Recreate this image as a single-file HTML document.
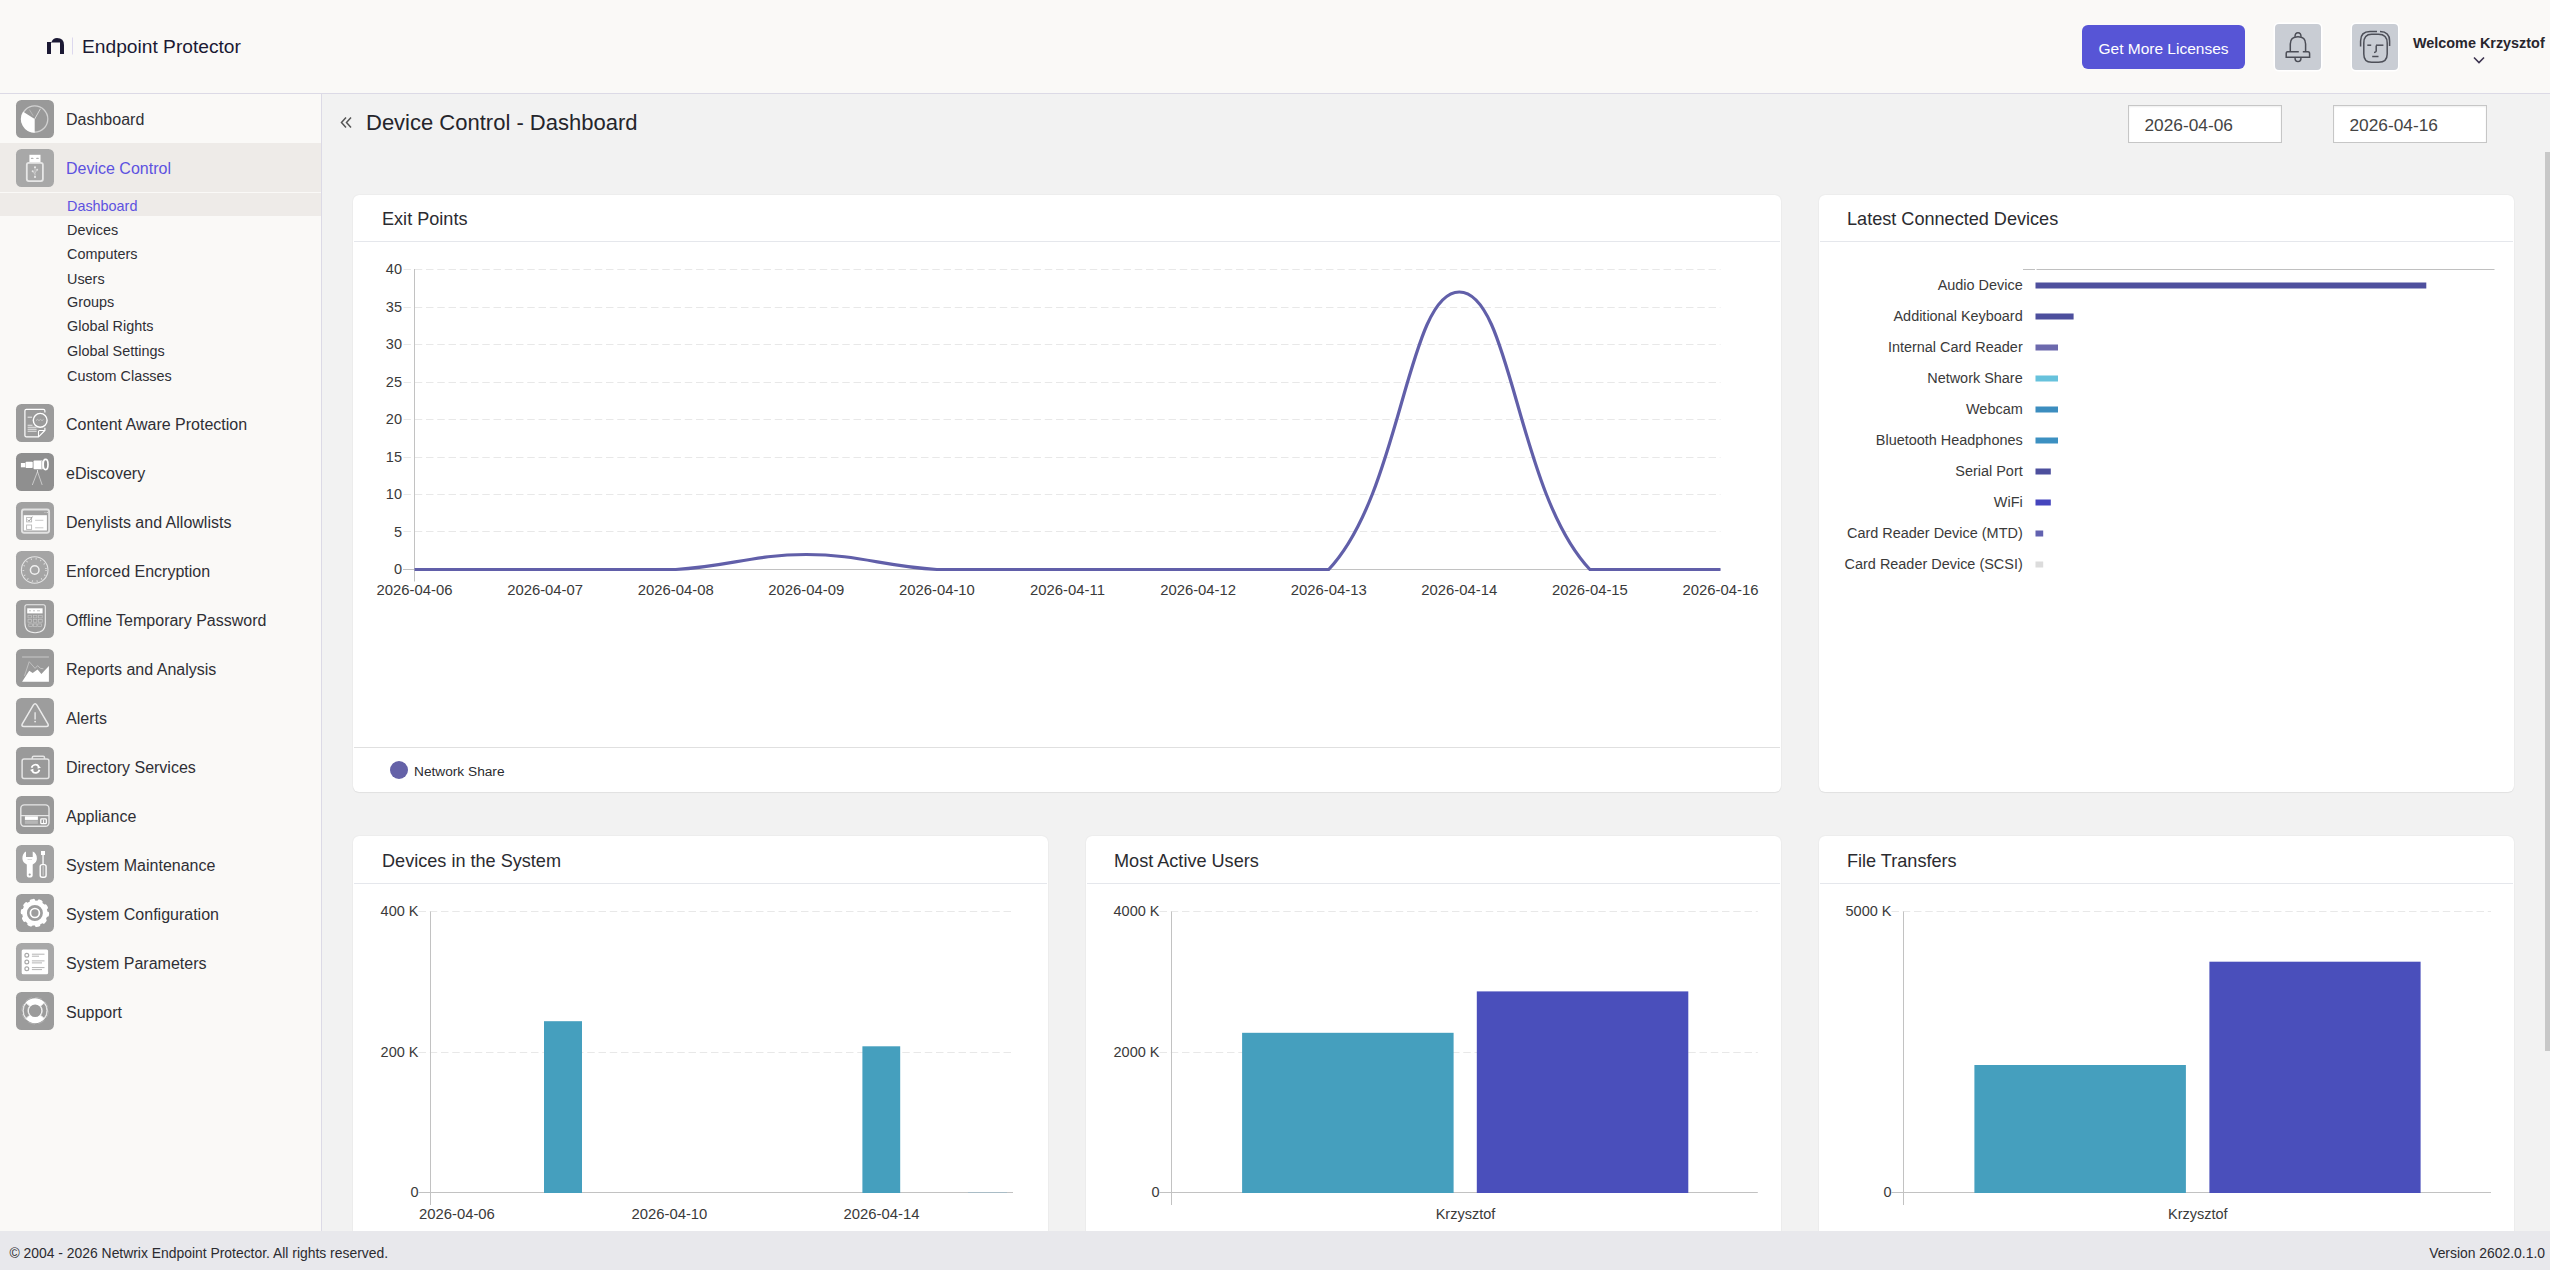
<!DOCTYPE html>
<html><head><meta charset="utf-8"><title>Device Control - Dashboard</title><style>
*{margin:0;padding:0;box-sizing:border-box}
html,body{width:2550px;height:1270px;overflow:hidden;background:#f2f2f2;font-family:"Liberation Sans",sans-serif}
.t{position:absolute;white-space:nowrap}
.abs{position:absolute}
.hdr{position:absolute;left:0;top:0;width:2550px;height:94px;background:#faf9f7;border-bottom:1px solid #dcdae6}
.side{position:absolute;left:0;top:94px;width:322px;height:1137px;background:#faf9f7;border-right:1px solid #dcdae6}
.foot{position:absolute;left:0;top:1231px;width:2550px;height:39px;background:#e8e8ec}
.card{position:absolute;background:#fff;border-radius:6px;box-shadow:0 0 1.5px rgba(0,0,0,0.10),0 1px 1px rgba(0,0,0,0.05)}
.ico{position:absolute;left:16px;width:38px;height:38px;border-radius:5.5px;background:#9b9b9b;overflow:hidden}
.ico svg{position:absolute;left:0;top:0}
</style></head><body>
<div class="hdr"></div>
<div class="side"></div>
<svg class="abs" style="left:40px;top:30px" width="40" height="30" viewBox="40 30 40 30"><path d="M47 54 V42 H51.5 Q53 38 57 38 Q64 38 64 45 V54 H60 V42.5 H51 V54 Z" fill="#1b1934"/><rect x="72" y="37.5" width="1" height="17" fill="#dcd8ee"/></svg>
<div class="t" style="top:36.74px;font-size:19.2px;line-height:19.2px;color:#1b1934;left:82px;">Endpoint Protector</div>

<div class="abs" style="left:2082px;top:25px;width:163px;height:44px;background:#5755d6;border-radius:6px"></div>
<div class="t" style="top:40.88px;font-size:15.5px;line-height:15.5px;color:#ffffff;left:1863.5px;width:600px;text-align:center;">Get More Licenses</div>

<div class="abs" style="left:2275px;top:24px;width:46px;height:46px;background:#c9cdd4;border-radius:4px;box-shadow:0 0 0 1.5px #fff"></div>
<svg class="abs" style="left:2275px;top:24px" width="46" height="46" viewBox="0 0 46 46" fill="none" stroke="#4b4d56" stroke-width="1.5"><path d="M15.3 27.3 V20 Q15.3 12.8 23 12.8 Q30.6 12.8 30.6 20 V27.3"/><path d="M12.6 27.8 H23.8 M27.8 27.8 H33 Q34.6 27.8 34.6 29.8 V33.2 H11.2 V29.8 Q11.2 27.8 12.6 27.8"/><path d="M20 12.8 Q20 8.8 23 8.8 Q26 8.8 26 12.8"/><path d="M20 33.4 Q20 37.5 23 37.5 Q26 37.5 26 33.4"/></svg>
<div class="abs" style="left:2352px;top:24px;width:46px;height:46px;background:#c9cdd4;border-radius:4px;box-shadow:0 0 0 1.5px #fff"></div>
<svg class="abs" style="left:2352px;top:24px" width="46" height="46" viewBox="0 0 46 46" fill="none" stroke="#4d4f58" stroke-width="1.5"><path d="M19.5 10.2 H26.5 Q35.2 10.2 35.2 19 V30 Q35.2 38.3 26.5 38.3 H19.5 Q11.8 38.3 11.8 30 V19 Q11.8 10.2 19.5 10.2 Z"/><path d="M8.6 22.5 V17 Q8.6 7.6 18 7.6 H25"/><path d="M28 7.6 Q37.6 7.8 37.6 17 V22"/><path d="M15.3 21.2 H19.2"/><path d="M24 21.2 H31.4"/><path d="M24.2 21.4 V27.2 Q24 28.4 22 28.4"/><path d="M20.2 32.5 H26.5"/></svg>
<div class="t" style="top:35.81px;font-size:14.4px;line-height:14.4px;color:#28262e;font-weight:bold;left:2413px;">Welcome Krzysztof</div>

<svg class="abs" style="left:2472px;top:55px" width="14" height="10" viewBox="0 0 14 10"><path d="M2 2.5 L7 7.5 L12 2.5" fill="none" stroke="#3d3450" stroke-width="1.6"/></svg>
<div class="abs" style="left:0;top:143px;width:321px;height:49px;background:#eeebe8"></div>
<div class="abs" style="left:0;top:193px;width:321px;height:23px;background:#eeebe8"></div>
<div class="ico" style="top:100px;background:#999999"><svg width="38" height="38" viewBox="0 0 38 38"><circle cx="18.7" cy="19" r="13.1" fill="none" stroke="#d2d2d2" stroke-width="1.3"/><path d="M18.7 19 L18.7 32.7 A13.7 13.7 0 0 1 7.14 11.64 Z" fill="#fff"/><path d="M18.7 19 L24.4 8.8" stroke="#dadada" stroke-width="1"/><path d="M13.4 9.6 L17.2 15.8" stroke="#bdbdbd" stroke-width="0.8"/></svg></div>
<div class="ico" style="top:149px;background:#a8a8a8"><svg width="38" height="38" viewBox="0 0 38 38"><rect x="13.4" y="5.8" width="11.1" height="7.6" fill="#fff"/><rect x="14.9" y="8.7" width="2.6" height="1.3" rx="0.6" fill="#b4b4b4"/><rect x="20.2" y="8.7" width="2.6" height="1.3" rx="0.6" fill="#b4b4b4"/><rect x="10.8" y="13.8" width="16.1" height="18.3" rx="2" fill="none" stroke="#e6e6e6" stroke-width="1.8"/><path d="M19 18.2 V28.1 M19 25.5 L16.7 22.2 M19 24 L21.2 20.7" stroke="#cfcfcf" stroke-width="0.8" fill="none"/><circle cx="19" cy="18.2" r="1" fill="#eee"/><circle cx="19" cy="28.1" r="1" fill="#eee"/><circle cx="16.7" cy="22.2" r="1" fill="#e6e6e6"/><circle cx="21.2" cy="20.7" r="1" fill="#ddd"/></svg></div>
<div class="t" style="top:112.25px;font-size:16px;line-height:16px;color:#2f2f35;left:66px;">Dashboard</div>

<div class="t" style="top:161.05px;font-size:16px;line-height:16px;color:#5d52e0;left:66px;">Device Control</div>

<div class="t" style="top:199.01px;font-size:14.4px;line-height:14.4px;color:#5d52e0;left:67px;">Dashboard</div>

<div class="t" style="top:223.01px;font-size:14.4px;line-height:14.4px;color:#2f2f35;left:67px;">Devices</div>

<div class="t" style="top:247.01px;font-size:14.4px;line-height:14.4px;color:#2f2f35;left:67px;">Computers</div>

<div class="t" style="top:271.61px;font-size:14.4px;line-height:14.4px;color:#2f2f35;left:67px;">Users</div>

<div class="t" style="top:295.41px;font-size:14.4px;line-height:14.4px;color:#2f2f35;left:67px;">Groups</div>

<div class="t" style="top:319.41px;font-size:14.4px;line-height:14.4px;color:#2f2f35;left:67px;">Global Rights</div>

<div class="t" style="top:343.51px;font-size:14.4px;line-height:14.4px;color:#2f2f35;left:67px;">Global Settings</div>

<div class="t" style="top:368.51px;font-size:14.4px;line-height:14.4px;color:#2f2f35;left:67px;">Custom Classes</div>

<div class="ico" style="top:404px;background:#9b9b9b"><svg width="38" height="38" viewBox="0 0 38 38"><path d="M17 5.3 H27.4 Q28.9 5.3 28.9 6.8 V8.5" fill="none" stroke="#fff" stroke-width="1.2"/><path d="M17 5.3 H10.4 Q8.9 5.3 8.9 6.8 V31.4 Q8.9 32.9 10.4 32.9 H22.5 L28.9 26.5 V23.8" fill="none" stroke="#fff" stroke-width="1.2"/><path d="M22.5 32.9 V27.6 Q22.5 26.5 23.6 26.5 H28.9" fill="none" stroke="#fff" stroke-width="1.1"/><circle cx="24.2" cy="16.3" r="6.9" fill="none" stroke="#fff" stroke-width="1.4"/><path d="M20 16.6 L21.5 15.4 L23 16.6 L24.5 15.4 L26 16.6 L27.5 15.4" fill="none" stroke="#d6d6d6" stroke-width="0.7"/><path d="M11.6 13.2 H16" stroke="#eee" stroke-width="1"/><path d="M11.6 21.3 H16.5 M11.6 23.3 H20.6 M11.6 25.3 H20.6 M11.6 27.3 H20.6" stroke="#e8e8e8" stroke-width="1.1"/></svg></div>
<div class="t" style="top:417.05px;font-size:16px;line-height:16px;color:#2f2f35;left:66px;">Content Aware Protection</div>

<div class="ico" style="top:453px;background:#8f8f8f"><svg width="38" height="38" viewBox="0 0 38 38"><rect x="4.9" y="10" width="4.4" height="4.3" fill="#fff"/><rect x="9.6" y="8.8" width="7.1" height="6.3" rx="0.8" fill="#fff"/><rect x="17.5" y="7.6" width="9.5" height="8.7" rx="1" fill="#fff"/><rect x="25" y="7.8" width="1.6" height="8.3" fill="#cfcfcf"/><ellipse cx="29.6" cy="11.5" rx="2.4" ry="5.1" fill="none" stroke="#fff" stroke-width="1.7"/><path d="M21.5 18.6 L16.3 32 M21.5 18.6 L26.2 32" stroke="#d8d8d8" stroke-width="0.8"/><path d="M21.5 17 V19.5" stroke="#ddd" stroke-width="1"/></svg></div>
<div class="t" style="top:466.05px;font-size:16px;line-height:16px;color:#2f2f35;left:66px;">eDiscovery</div>

<div class="ico" style="top:502px;background:#a2a2a2"><svg width="38" height="38" viewBox="0 0 38 38"><rect x="5.9" y="7.5" width="27.2" height="23.2" rx="2.2" fill="none" stroke="#e2e2e2" stroke-width="1.9"/><rect x="7.7" y="13.2" width="23.2" height="15.3" fill="#fff"/><circle cx="31.3" cy="10.4" r="0.7" fill="#ddd"/><circle cx="29" cy="10.4" r="0.6" fill="#c8c8c8"/><rect x="10.6" y="15.4" width="5" height="4.5" fill="none" stroke="#b8b8b8" stroke-width="0.9"/><rect x="10.6" y="23" width="5" height="4.4" fill="none" stroke="#b8b8b8" stroke-width="0.9"/><path d="M11.5 17.6 L13 19.2 L16.5 14.6" stroke="#9a9a9a" stroke-width="0.9" fill="none"/><path d="M19.1 18.3 H27.4 M19.1 25.8 H27.4" stroke="#c4c4c4" stroke-width="0.9"/></svg></div>
<div class="t" style="top:515.05px;font-size:16px;line-height:16px;color:#2f2f35;left:66px;">Denylists and Allowlists</div>

<div class="ico" style="top:551px;background:#a5a5a5"><svg width="38" height="38" viewBox="0 0 38 38"><circle cx="18.7" cy="19" r="13.3" fill="none" stroke="#e4e4e4" stroke-width="1.1"/><circle cx="18.7" cy="19" r="11.3" fill="none" stroke="#e0e0e0" stroke-width="1.6" stroke-dasharray="0.9 4.0"/><circle cx="18.7" cy="19" r="4.3" fill="none" stroke="#f0f0f0" stroke-width="1.5"/></svg></div>
<div class="t" style="top:564.05px;font-size:16px;line-height:16px;color:#2f2f35;left:66px;">Enforced Encryption</div>

<div class="ico" style="top:600px;background:#9b9b9b"><svg width="38" height="38" viewBox="0 0 38 38"><path d="M10.9 4.7 H27.3 Q29.3 4.7 29.3 6.7 V23 Q29.3 32.7 19.1 32.7 Q8.9 32.7 8.9 23 V6.7 Q8.9 4.7 10.9 4.7 Z" fill="none" stroke="#ececec" stroke-width="1.1"/><rect x="11.2" y="8.3" width="15.4" height="5.1" fill="#fff"/><path d="M13 10.8 H15 M17 10.8 H19 M21 10.8 H24" stroke="#bdbdbd" stroke-width="0.9"/><g fill="none" stroke="#c6c6c6" stroke-width="0.7"><rect x="12" y="15.3" width="3.6" height="2.6"/><rect x="17.3" y="15.3" width="3.6" height="2.6"/><rect x="22.6" y="15.3" width="3.6" height="2.6"/><rect x="12" y="19.6" width="3.6" height="2.6"/><rect x="17.3" y="19.6" width="3.6" height="2.6"/><rect x="22.6" y="19.6" width="3.6" height="2.6"/><rect x="12.8" y="23.9" width="3.6" height="2.6"/><rect x="17.3" y="23.9" width="3.6" height="2.6"/><rect x="21.8" y="23.9" width="3.6" height="2.6"/></g></svg></div>
<div class="t" style="top:613.05px;font-size:16px;line-height:16px;color:#2f2f35;left:66px;">Offline Temporary Password</div>

<div class="ico" style="top:649px;background:#999999"><svg width="38" height="38" viewBox="0 0 38 38"><path d="M6.1 8 H32.9" stroke="#b8b8b8" stroke-width="1.4"/><path d="M6.1 32.8 L13.2 21.8 L16.7 24.1 L21.5 20.6 L25.4 24.9 L32.9 17 V32.8 Z" fill="#fff"/><path d="M8.5 26.9 L13.2 12.7 L19.1 19.4 L21.5 16.7 L24.6 19.4 L27.4 19.8" fill="none" stroke="#c4c4c4" stroke-width="0.9"/></svg></div>
<div class="t" style="top:662.05px;font-size:16px;line-height:16px;color:#2f2f35;left:66px;">Reports and Analysis</div>

<div class="ico" style="top:698px;background:#9d9d9d"><svg width="38" height="38" viewBox="0 0 38 38"><path d="M17.3 7.1 Q19.1 4.6 20.9 7.1 L31.9 25.8 Q33.2 28.4 30.3 28.4 H7.9 Q5 28.4 6.3 25.8 Z" fill="none" stroke="#eaeaea" stroke-width="1.5"/><path d="M19.1 14.3 V21.5" stroke="#eee" stroke-width="1.3"/><circle cx="19.1" cy="23.6" r="0.9" fill="#eee"/></svg></div>
<div class="t" style="top:711.05px;font-size:16px;line-height:16px;color:#2f2f35;left:66px;">Alerts</div>

<div class="ico" style="top:747px;background:#9a9a9a"><svg width="38" height="38" viewBox="0 0 38 38"><path d="M8.1 12 H30.9 Q32.9 12 32.9 14 V29.6 Q32.9 31.6 30.9 31.6 H8.1 Q6.1 31.6 6.1 29.6 V14 Q6.1 12 8.1 12 Z" fill="none" stroke="#e4e4e4" stroke-width="1.5"/><path d="M16.3 12 V10.6 Q16.3 9.2 17.7 9.2 H27.1 Q28.5 9.2 28.5 10.6 V12" fill="none" stroke="#e4e4e4" stroke-width="1.5"/><path d="M15.6 20.8 A4 4 0 0 1 22.9 19.6" fill="none" stroke="#fff" stroke-width="1.7"/><path d="M23.4 22.8 A4 4 0 0 1 16.1 24" fill="none" stroke="#fff" stroke-width="1.7"/><path d="M21.6 18.2 L25 20.6 L21.6 21.8 Z M17.4 25.4 L14 23 L17.4 21.8 Z" fill="#fff"/></svg></div>
<div class="t" style="top:760.05px;font-size:16px;line-height:16px;color:#2f2f35;left:66px;">Directory Services</div>

<div class="ico" style="top:796px;background:#999999"><svg width="38" height="38" viewBox="0 0 38 38"><rect x="4.8" y="8.9" width="28.2" height="21.4" rx="3.5" fill="none" stroke="#e6e6e6" stroke-width="1.4"/><path d="M4.8 19.6 H33" stroke="#e6e6e6" stroke-width="1.1"/><rect x="8.9" y="20.4" width="13" height="3.5" fill="#fff"/><rect x="8.9" y="24.3" width="13" height="3.6" fill="#b6b6b6"/><rect x="24.8" y="22.9" width="5.5" height="4.8" rx="0.8" fill="none" stroke="#fff" stroke-width="1.3"/><rect x="27.1" y="23.6" width="1" height="3.4" fill="#fff"/></svg></div>
<div class="t" style="top:809.05px;font-size:16px;line-height:16px;color:#2f2f35;left:66px;">Appliance</div>

<div class="ico" style="top:845px;background:#a2a2a2"><svg width="38" height="38" viewBox="0 0 38 38"><path d="M10 6.6 V11.9 H16.7 V6.6 Q20.9 8.4 20.9 13.5 Q20.9 17.4 16.7 19.5 V30.2 Q16.7 32.6 13.75 32.6 Q10.8 32.6 10.8 30.2 V19.5 Q6.4 17.4 6.4 13.5 Q6.4 8.4 10 6.6 Z" fill="#fff"/><circle cx="13.7" cy="29.6" r="1.1" fill="#a2a2a2"/><path d="M11.5 14.5 H16" stroke="#d0d0d0" stroke-width="0.8"/><rect x="25" y="6" width="4" height="4" fill="#fff"/><rect x="26.4" y="10" width="1.3" height="9.4" fill="#fff"/><rect x="24.2" y="19.6" width="5.9" height="12.6" rx="2" fill="none" stroke="#fff" stroke-width="1.4"/><path d="M27.15 21 V30.5" stroke="#e0e0e0" stroke-width="0.8"/></svg></div>
<div class="t" style="top:858.05px;font-size:16px;line-height:16px;color:#2f2f35;left:66px;">System Maintenance</div>

<div class="ico" style="top:894px;background:#9d9d9d"><svg width="38" height="38" viewBox="0 0 38 38"><circle cx="18.9" cy="19" r="12.6" fill="none" stroke="#fff" stroke-width="3.2" stroke-linecap="round" stroke-dasharray="2.2 5.7"/><circle cx="18.9" cy="19" r="10.3" fill="none" stroke="#fff" stroke-width="4.6"/><circle cx="18.9" cy="19" r="4.5" fill="none" stroke="#fff" stroke-width="1.7"/></svg></div>
<div class="t" style="top:907.05px;font-size:16px;line-height:16px;color:#2f2f35;left:66px;">System Configuration</div>

<div class="ico" style="top:943px;background:#a8a8a8"><svg width="38" height="38" viewBox="0 0 38 38"><rect x="5.7" y="6.4" width="26.4" height="24.8" rx="1.5" fill="#fff"/><g fill="none" stroke="#a9a9a9" stroke-width="1.2"><circle cx="10.8" cy="12.3" r="1.9"/><circle cx="10.8" cy="19" r="1.9"/><circle cx="10.8" cy="25.7" r="1.9"/></g><path d="M15.9 11.2 H28.5 M15.9 13.2 H23 M15.9 17.9 H28.5 M15.9 19.9 H26 M15.9 24.6 H28.5 M15.9 26.6 H26" stroke="#b4b4b4" stroke-width="1"/></svg></div>
<div class="t" style="top:956.05px;font-size:16px;line-height:16px;color:#2f2f35;left:66px;">System Parameters</div>

<div class="ico" style="top:992px;background:#9b9b9b"><svg width="38" height="38" viewBox="0 0 38 38"><circle cx="19.1" cy="18.7" r="9.4" fill="none" stroke="#fff" stroke-width="6.2"/><path d="M10.06 11.12 A11.8 11.8 0 0 0 10.06 26.28 L13.58 23.33 A7.2 7.2 0 0 1 13.58 14.07 Z" fill="#9b9b9b" stroke="#e8e8e8" stroke-width="0.9"/><path d="M28.14 11.12 A11.8 11.8 0 0 1 28.14 26.28 L24.62 23.33 A7.2 7.2 0 0 0 24.62 14.07 Z" fill="#9b9b9b" stroke="#e8e8e8" stroke-width="0.9"/><circle cx="19.1" cy="18.7" r="13.3" fill="none" stroke="#b8b8b8" stroke-width="0.8" stroke-dasharray="7 3.4"/></svg></div>
<div class="t" style="top:1005.05px;font-size:16px;line-height:16px;color:#2f2f35;left:66px;">Support</div>

<svg class="abs" style="left:338px;top:114px" width="16" height="16" viewBox="0 0 16 16"><path d="M8 3.5 L3.5 8.5 L8 13.5 M13 3.5 L8.5 8.5 L13 13.5" fill="none" stroke="#555" stroke-width="1.5"/></svg>
<div class="t" style="top:111.87px;font-size:22px;line-height:22px;color:#25252b;left:366px;">Device Control - Dashboard</div>

<div class="abs" style="left:2128px;top:105px;width:154px;height:38px;background:#fff;border:1px solid #c6c6c6;box-shadow:inset 0 1px 2px rgba(0,0,0,0.07)"></div>
<div class="t" style="top:117.05px;font-size:17.3px;line-height:17.3px;color:#444;left:2144.5px;">2026-04-06</div>

<div class="abs" style="left:2333px;top:105px;width:154px;height:38px;background:#fff;border:1px solid #c6c6c6;box-shadow:inset 0 1px 2px rgba(0,0,0,0.07)"></div>
<div class="t" style="top:117.05px;font-size:17.3px;line-height:17.3px;color:#444;left:2349.5px;">2026-04-16</div>

<div class="abs" style="left:2545px;top:152px;width:5px;height:899px;background:#c8c8c8"></div>
<div class="card" style="left:353px;top:195px;width:1428px;height:597px"></div><div class="abs" style="left:354px;top:241px;width:1426px;height:1px;background:#e5e7ec"></div>
<div class="t" style="top:209.67px;font-size:18.1px;line-height:18.1px;color:#2b2b30;left:382px;">Exit Points</div>

<div class="card" style="left:1819px;top:195px;width:695px;height:597px"></div><div class="abs" style="left:1820px;top:241px;width:693px;height:1px;background:#e5e7ec"></div>
<div class="t" style="top:209.67px;font-size:18.1px;line-height:18.1px;color:#2b2b30;left:1847px;">Latest Connected Devices</div>

<div class="card" style="left:353px;top:836px;width:695px;height:420px"></div><div class="abs" style="left:354px;top:883px;width:693px;height:1px;background:#e5e7ec"></div>
<div class="t" style="top:851.67px;font-size:18.1px;line-height:18.1px;color:#2b2b30;left:382px;">Devices in the System</div>

<div class="card" style="left:1086px;top:836px;width:695px;height:420px"></div><div class="abs" style="left:1087px;top:883px;width:693px;height:1px;background:#e5e7ec"></div>
<div class="t" style="top:851.67px;font-size:18.1px;line-height:18.1px;color:#2b2b30;left:1114px;">Most Active Users</div>

<div class="card" style="left:1819px;top:836px;width:695px;height:420px"></div><div class="abs" style="left:1820px;top:883px;width:693px;height:1px;background:#e5e7ec"></div>
<div class="t" style="top:851.67px;font-size:18.1px;line-height:18.1px;color:#2b2b30;left:1847px;">File Transfers</div>

<svg class="abs" style="left:0;top:0" width="2550" height="1270" viewBox="0 0 2550 1270"><path d="M403 569.5 H1720.5" stroke="#c2c2c2" stroke-width="1"/><path d="M403.5 531.5 H1720.5" stroke="#e8e8e8" stroke-width="1" stroke-dasharray="7.5 3.75"/><path d="M403.5 494.5 H1720.5" stroke="#e8e8e8" stroke-width="1" stroke-dasharray="7.5 3.75"/><path d="M403.5 457.5 H1720.5" stroke="#e8e8e8" stroke-width="1" stroke-dasharray="7.5 3.75"/><path d="M403.5 419.5 H1720.5" stroke="#e8e8e8" stroke-width="1" stroke-dasharray="7.5 3.75"/><path d="M403.5 382.5 H1720.5" stroke="#e8e8e8" stroke-width="1" stroke-dasharray="7.5 3.75"/><path d="M403.5 344.5 H1720.5" stroke="#e8e8e8" stroke-width="1" stroke-dasharray="7.5 3.75"/><path d="M403.5 307.5 H1720.5" stroke="#e8e8e8" stroke-width="1" stroke-dasharray="7.5 3.75"/><path d="M403.5 269.5 H1720.5" stroke="#e8e8e8" stroke-width="1" stroke-dasharray="7.5 3.75"/><path d="M414.5 269 V581.5" stroke="#c2c2c2" stroke-width="1"/></svg>
<div class="t" style="top:562.22px;font-size:14.5px;line-height:14.5px;color:#3a3a3a;right:2148px;text-align:right;">0</div>

<div class="t" style="top:524.72px;font-size:14.5px;line-height:14.5px;color:#3a3a3a;right:2148px;text-align:right;">5</div>

<div class="t" style="top:487.22px;font-size:14.5px;line-height:14.5px;color:#3a3a3a;right:2148px;text-align:right;">10</div>

<div class="t" style="top:449.72px;font-size:14.5px;line-height:14.5px;color:#3a3a3a;right:2148px;text-align:right;">15</div>

<div class="t" style="top:412.22px;font-size:14.5px;line-height:14.5px;color:#3a3a3a;right:2148px;text-align:right;">20</div>

<div class="t" style="top:374.72px;font-size:14.5px;line-height:14.5px;color:#3a3a3a;right:2148px;text-align:right;">25</div>

<div class="t" style="top:337.22px;font-size:14.5px;line-height:14.5px;color:#3a3a3a;right:2148px;text-align:right;">30</div>

<div class="t" style="top:299.72px;font-size:14.5px;line-height:14.5px;color:#3a3a3a;right:2148px;text-align:right;">35</div>

<div class="t" style="top:262.22px;font-size:14.5px;line-height:14.5px;color:#3a3a3a;right:2148px;text-align:right;">40</div>

<div class="t" style="top:583.23px;font-size:14.85px;line-height:14.85px;color:#3a3a3a;left:114.5px;width:600px;text-align:center;">2026-04-06</div>

<div class="t" style="top:583.23px;font-size:14.85px;line-height:14.85px;color:#3a3a3a;left:245.10000000000002px;width:600px;text-align:center;">2026-04-07</div>

<div class="t" style="top:583.23px;font-size:14.85px;line-height:14.85px;color:#3a3a3a;left:375.70000000000005px;width:600px;text-align:center;">2026-04-08</div>

<div class="t" style="top:583.23px;font-size:14.85px;line-height:14.85px;color:#3a3a3a;left:506.29999999999995px;width:600px;text-align:center;">2026-04-09</div>

<div class="t" style="top:583.23px;font-size:14.85px;line-height:14.85px;color:#3a3a3a;left:636.9px;width:600px;text-align:center;">2026-04-10</div>

<div class="t" style="top:583.23px;font-size:14.85px;line-height:14.85px;color:#3a3a3a;left:767.5px;width:600px;text-align:center;">2026-04-11</div>

<div class="t" style="top:583.23px;font-size:14.85px;line-height:14.85px;color:#3a3a3a;left:898.0999999999999px;width:600px;text-align:center;">2026-04-12</div>

<div class="t" style="top:583.23px;font-size:14.85px;line-height:14.85px;color:#3a3a3a;left:1028.6999999999998px;width:600px;text-align:center;">2026-04-13</div>

<div class="t" style="top:583.23px;font-size:14.85px;line-height:14.85px;color:#3a3a3a;left:1159.3px;width:600px;text-align:center;">2026-04-14</div>

<div class="t" style="top:583.23px;font-size:14.85px;line-height:14.85px;color:#3a3a3a;left:1289.8999999999999px;width:600px;text-align:center;">2026-04-15</div>

<div class="t" style="top:583.23px;font-size:14.85px;line-height:14.85px;color:#3a3a3a;left:1420.5px;width:600px;text-align:center;">2026-04-16</div>

<svg class="abs" style="left:0;top:0" width="2550" height="1270"><path d="M414.50 569.50 C466.74 569.50 492.86 569.50 545.10 569.50 C597.34 569.50 623.63 569.50 675.70 569.50 C728.11 566.49 754.06 554.50 806.30 554.50 C858.54 554.50 884.49 566.49 936.90 569.50 C988.97 569.50 1015.26 569.50 1067.50 569.50 C1119.74 569.50 1145.86 569.50 1198.10 569.50 C1250.34 569.50 1297.50 569.50 1328.70 569.50 C1401.98 491.65 1407.06 292.00 1459.30 292.00 C1511.54 292.00 1516.62 491.65 1589.90 569.50 C1621.10 569.50 1668.26 569.50 1720.50 569.50" fill="none" stroke="#615fa9" stroke-width="3.2"/></svg>
<div class="abs" style="left:354px;top:747px;width:1426px;height:1px;background:#e0e0e0"></div>
<div class="abs" style="left:389.5px;top:760.5px;width:18px;height:18px;border-radius:50%;background:#6562a8"></div>
<div class="t" style="top:764.70px;font-size:13.7px;line-height:13.7px;color:#2b2b30;left:414px;">Network Share</div>

<svg class="abs" style="left:0;top:0" width="2550" height="1270"><path d="M2023 269.5 H2035 M2036.5 269.5 H2494.5" stroke="#c0c0c0" stroke-width="1.2"/><rect x="2035.5" y="282.5" width="390.8" height="6" fill="#4f509e"/><rect x="2035.5" y="313.5" width="38.1" height="6" fill="#4d4f9d"/><rect x="2035.5" y="344.5" width="22.5" height="6" fill="#6c69ad"/><rect x="2035.5" y="375.5" width="22.5" height="6" fill="#67c2dc"/><rect x="2035.5" y="406.5" width="22.5" height="6" fill="#3c8dbf"/><rect x="2035.5" y="437.5" width="22.5" height="6" fill="#3c90c1"/><rect x="2035.5" y="468.5" width="15.3" height="6" fill="#4d4f9d"/><rect x="2035.5" y="499.5" width="15.3" height="6" fill="#4545bd"/><rect x="2035.5" y="530.5" width="7.7" height="6" fill="#6262b0"/><rect x="2035.5" y="561.5" width="7.7" height="6" fill="#dcdcdc"/></svg>
<div class="t" style="top:278.27px;font-size:14.45px;line-height:14.45px;color:#3a3a3a;right:527.3px;text-align:right;">Audio Device</div>

<div class="t" style="top:309.27px;font-size:14.45px;line-height:14.45px;color:#3a3a3a;right:527.3px;text-align:right;">Additional Keyboard</div>

<div class="t" style="top:340.27px;font-size:14.45px;line-height:14.45px;color:#3a3a3a;right:527.3px;text-align:right;">Internal Card Reader</div>

<div class="t" style="top:371.27px;font-size:14.45px;line-height:14.45px;color:#3a3a3a;right:527.3px;text-align:right;">Network Share</div>

<div class="t" style="top:402.27px;font-size:14.45px;line-height:14.45px;color:#3a3a3a;right:527.3px;text-align:right;">Webcam</div>

<div class="t" style="top:433.27px;font-size:14.45px;line-height:14.45px;color:#3a3a3a;right:527.3px;text-align:right;">Bluetooth Headphones</div>

<div class="t" style="top:464.27px;font-size:14.45px;line-height:14.45px;color:#3a3a3a;right:527.3px;text-align:right;">Serial Port</div>

<div class="t" style="top:495.27px;font-size:14.45px;line-height:14.45px;color:#3a3a3a;right:527.3px;text-align:right;">WiFi</div>

<div class="t" style="top:526.27px;font-size:14.45px;line-height:14.45px;color:#3a3a3a;right:527.3px;text-align:right;">Card Reader Device (MTD)</div>

<div class="t" style="top:557.27px;font-size:14.45px;line-height:14.45px;color:#3a3a3a;right:527.3px;text-align:right;">Card Reader Device (SCSI)</div>

<svg class="abs" style="left:0;top:0" width="2550" height="1270"><path d="M418.5 911.5 H1013" stroke="#e8e8e8" stroke-width="1" stroke-dasharray="7.5 3.75"/><path d="M418.5 1052.5 H1013" stroke="#e8e8e8" stroke-width="1" stroke-dasharray="7.5 3.75"/><path d="M418.5 1192.5 H1013" stroke="#c2c2c2" stroke-width="1"/><path d="M430.5 911.5 V1205.0" stroke="#c2c2c2" stroke-width="1"/><rect x="544" y="1021.2" width="38" height="171.79999999999995" fill="#459fbe"/><rect x="862.4" y="1046.3" width="37.80000000000007" height="146.70000000000005" fill="#459fbe"/></svg><div class="t" style="top:904.22px;font-size:14.5px;line-height:14.5px;color:#3a3a3a;right:2131.5px;text-align:right;">400 K</div>
<div class="t" style="top:1045.22px;font-size:14.5px;line-height:14.5px;color:#3a3a3a;right:2131.5px;text-align:right;">200 K</div>
<div class="t" style="top:1185.22px;font-size:14.5px;line-height:14.5px;color:#3a3a3a;right:2131.5px;text-align:right;">0</div>
<div class="t" style="top:1207.03px;font-size:14.85px;line-height:14.85px;color:#3a3a3a;left:156.89999999999998px;width:600px;text-align:center;">2026-04-06</div>
<div class="t" style="top:1207.03px;font-size:14.85px;line-height:14.85px;color:#3a3a3a;left:369.4px;width:600px;text-align:center;">2026-04-10</div>
<div class="t" style="top:1207.03px;font-size:14.85px;line-height:14.85px;color:#3a3a3a;left:581.5px;width:600px;text-align:center;">2026-04-14</div>

<div class="abs" style="left:968px;top:1192px;width:39px;height:1px;background:#a9bcc6"></div>
<svg class="abs" style="left:0;top:0" width="2550" height="1270"><path d="M1159.5 911.5 H1757.8" stroke="#e8e8e8" stroke-width="1" stroke-dasharray="7.5 3.75"/><path d="M1159.5 1052.5 H1757.8" stroke="#e8e8e8" stroke-width="1" stroke-dasharray="7.5 3.75"/><path d="M1159.5 1192.5 H1757.8" stroke="#c2c2c2" stroke-width="1"/><path d="M1171.5 911.5 V1205.0" stroke="#c2c2c2" stroke-width="1"/><rect x="1242.1" y="1032.8" width="211.5" height="160.20000000000005" fill="#459fbe"/><rect x="1476.8" y="991.4" width="211.5" height="201.60000000000002" fill="#4a4fbb"/></svg><div class="t" style="top:904.22px;font-size:14.5px;line-height:14.5px;color:#3a3a3a;right:1390.5px;text-align:right;">4000 K</div>
<div class="t" style="top:1045.22px;font-size:14.5px;line-height:14.5px;color:#3a3a3a;right:1390.5px;text-align:right;">2000 K</div>
<div class="t" style="top:1185.22px;font-size:14.5px;line-height:14.5px;color:#3a3a3a;right:1390.5px;text-align:right;">0</div>
<div class="t" style="top:1207.32px;font-size:14.5px;line-height:14.5px;color:#3a3a3a;left:1165.5px;width:600px;text-align:center;">Krzysztof</div>

<svg class="abs" style="left:0;top:0" width="2550" height="1270"><path d="M1891.5 911.5 H2491" stroke="#e8e8e8" stroke-width="1" stroke-dasharray="7.5 3.75"/><path d="M1891.5 1192.5 H2491" stroke="#c2c2c2" stroke-width="1"/><path d="M1903.5 911.5 V1205.0" stroke="#c2c2c2" stroke-width="1"/><rect x="1974.4" y="1065" width="211.5" height="128.0" fill="#459fbe"/><rect x="2209.4" y="961.7" width="211.19999999999982" height="231.29999999999995" fill="#4a4fbb"/></svg><div class="t" style="top:904.22px;font-size:14.5px;line-height:14.5px;color:#3a3a3a;right:658.5px;text-align:right;">5000 K</div>
<div class="t" style="top:1185.22px;font-size:14.5px;line-height:14.5px;color:#3a3a3a;right:658.5px;text-align:right;">0</div>
<div class="t" style="top:1207.32px;font-size:14.5px;line-height:14.5px;color:#3a3a3a;left:1897.8000000000002px;width:600px;text-align:center;">Krzysztof</div>

<div class="foot"></div>
<div class="t" style="top:1247.03px;font-size:13.9px;line-height:13.9px;color:#2b2b30;left:9.5px;">© 2004 - 2026 Netwrix Endpoint Protector. All rights reserved.</div>

<div class="t" style="top:1247.03px;font-size:13.9px;line-height:13.9px;color:#2b2b30;right:5px;text-align:right;">Version 2602.0.1.0</div>

</body></html>
